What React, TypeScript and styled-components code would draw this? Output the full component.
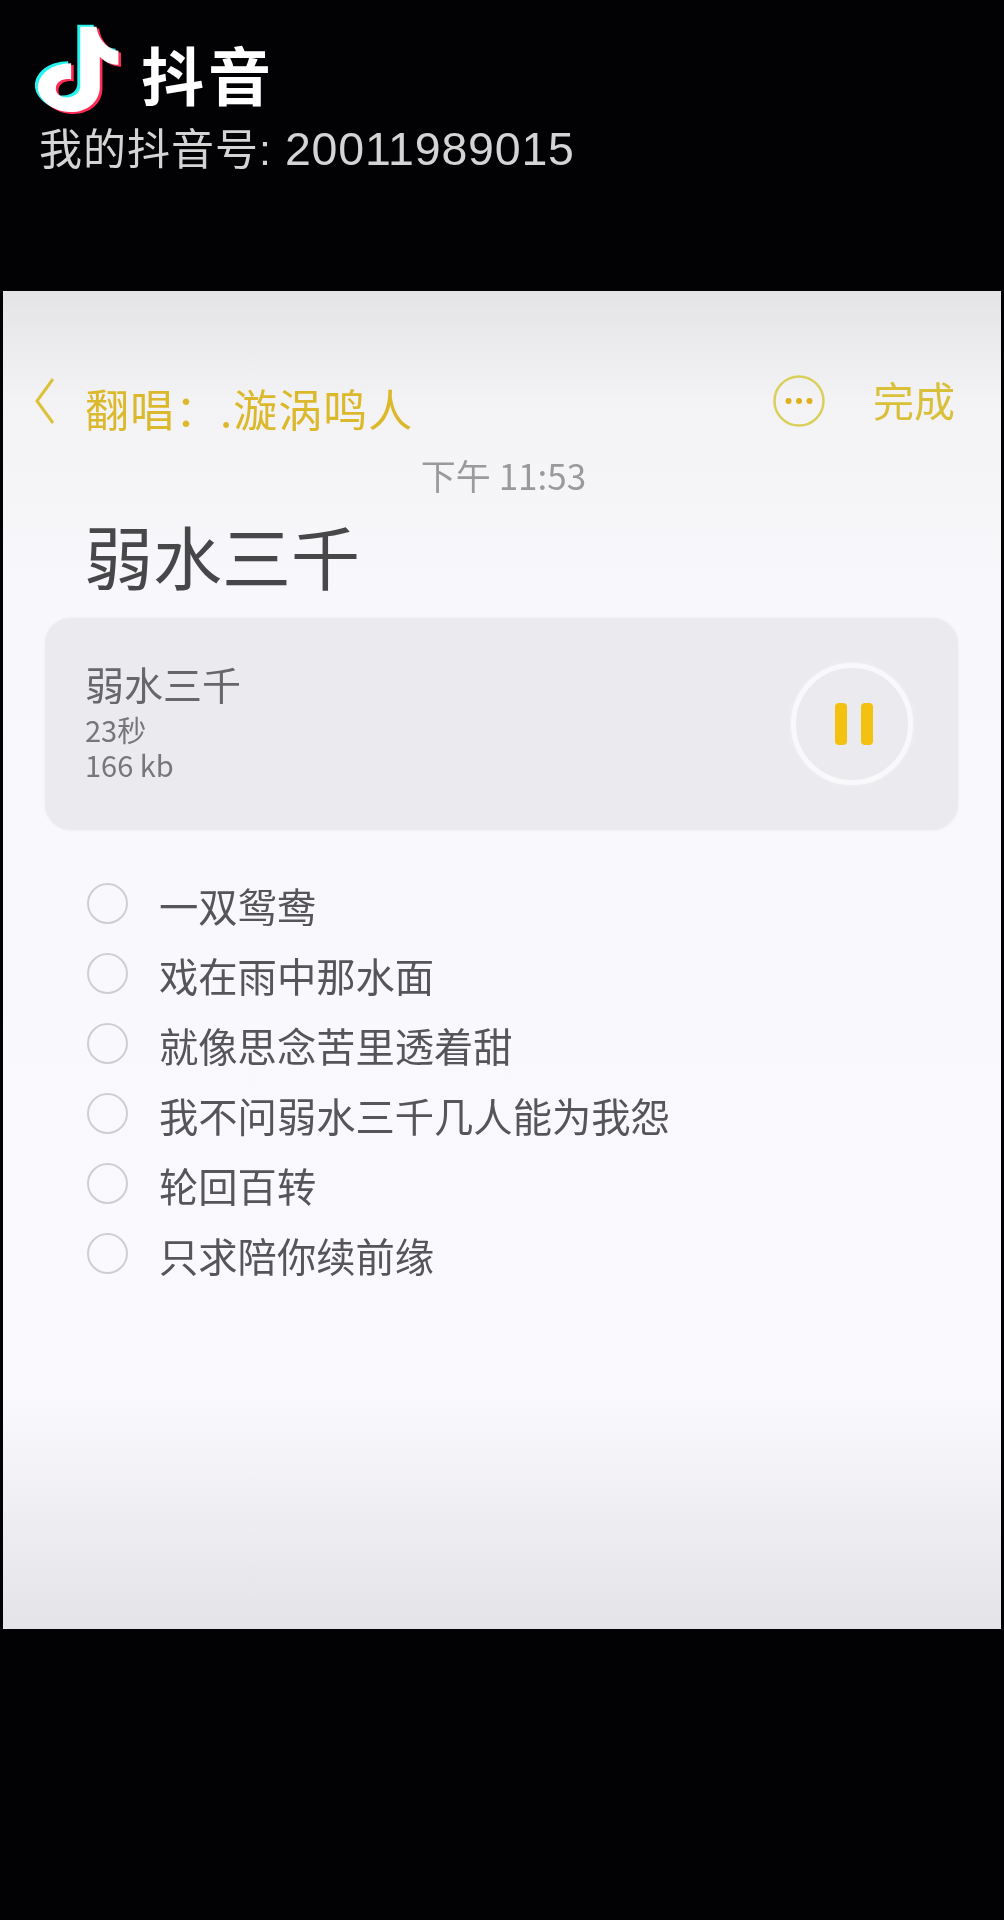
import styled, { createGlobalStyle } from 'styled-components';

const lyrics = [
  '一双鸳鸯',
  '戏在雨中那水面',
  '就像思念苦里透着甜',
  '我不问弱水三千几人能为我怨',
  '轮回百转',
  '只求陪你续前缘',
];

const GlobalStyle = createGlobalStyle`
  html, body {
    margin: 0;
    background: #020204;
  }
  body {
    font-family: "Noto Sans CJK SC", "Liberation Sans", sans-serif;
  }
`;

const Page = styled.div`
  width: 1004px;
  height: 1920px;
  background: #020204;
  overflow: hidden;
`;

const Watermark = styled.header`
  height: 291px;
  box-sizing: border-box;
  padding: 24px 0 0 32px;
  filter: blur(0.6px);
`;

const Brand = styled.div`
  display: flex;
  align-items: flex-start;
  gap: 19px;
  height: 94px;
`;

const BrandName = styled.span`
  margin-top: 13px;
  font-size: 63px;
  line-height: 72px;
  font-weight: 700;
  letter-spacing: 4px;
  color: #fff;
`;

const AccountLine = styled.div`
  margin: 6px 0 0 7px;
  font-family: "Liberation Sans", "Noto Sans CJK SC", sans-serif;
  font-size: 43px;
  line-height: 50px;
  letter-spacing: 1px;
  color: #d4d4d4;
`;

const AccountNumber = styled.span`
  font-size: 46.5px;
  letter-spacing: 0.8px;
`;

const Note = styled.div`
  height: 1338px;
  margin: 0 3px;
  box-sizing: border-box;
  padding-top: 85px;
  background: linear-gradient(
    #e4e4e6 0,
    #f3f3f5 110px,
    #f8f8fc 300px,
    #f9f9fe 1100px,
    #f0f0f4 1210px,
    #e4e3e8 100%
  );
  filter: blur(0.6px);
`;

const TopBar = styled.div`
  display: flex;
  align-items: center;
  height: 50px;
  padding: 0 46px 0 31px;
`;

const Author = styled.span`
  flex: 1;
  margin: 14px 0 0 29px;
  font-size: 44px;
  line-height: 50px;
  letter-spacing: 1px;
  color: #dcb92c;
  white-space: nowrap;
`;

const Done = styled.span`
  margin: -4px 0 0 48px;
  font-size: 41px;
  line-height: 50px;
  color: #d9c038;
`;

const Timestamp = styled.div`
  margin-top: 26px;
  padding-left: 3px;
  text-align: center;
  font-size: 35px;
  line-height: 46px;
  color: #9a9a9c;
`;

const Title = styled.h1`
  margin: 15px 0 0 81px;
  font-size: 69px;
  line-height: 84px;
  font-weight: 400;
  color: #47474a;
`;

const AudioCard = styled.section`
  display: flex;
  align-items: center;
  justify-content: space-between;
  height: 212px;
  margin: 21px 43px 0 42px;
  box-sizing: border-box;
  padding: 0 45px 0 40px;
  border-radius: 26px;
  background: #ebebef;
  box-shadow: 0 0 3px #ebebef;
`;

const AudioText = styled.div`
  margin-top: -6px;
`;

const AudioName = styled.div`
  margin-bottom: 6px;
  font-size: 39px;
  line-height: 46px;
  color: #67676a;
`;

const AudioMeta = styled.div`
  font-size: 29px;
  line-height: 35px;
  color: #77777a;
`;

const PauseButton = styled.div`
  display: flex;
  align-items: center;
  justify-content: center;
  gap: 14px;
  width: 122px;
  height: 122px;
  box-sizing: border-box;
  padding-left: 3px;
  border: 5px solid #f9f9fb;
  border-radius: 50%;
  box-shadow: 0 0 3px #f9f9fb;
`;

const PauseBar = styled.span`
  width: 12px;
  height: 42px;
  border-radius: 4px;
  background: #f3c10f;
`;

const Checklist = styled.ul`
  display: flex;
  flex-direction: column;
  gap: 20px;
  margin: 50px 0 0;
  padding: 0 0 0 84px;
  list-style: none;
`;

const ChecklistRow = styled.li`
  display: flex;
  align-items: flex-start;
  gap: 31px;
  height: 50px;
`;

const Radio = styled.span`
  flex: none;
  width: 41px;
  height: 41px;
  margin-top: 3px;
  box-sizing: border-box;
  border: 2px solid #cfcfd2;
  border-radius: 50%;
`;

const RowText = styled.span`
  font-size: 39.3px;
  line-height: 50px;
  color: #565659;
`;

function DouyinLogo() {
  const shape =
    'M178 48 L228 48 C232 85 262 118 295 122 L295 165 C272 165 252 155 238 140 L238 232 C238 280 195 312 145 310 C90 308 48 270 48 235 C48 195 90 160 150 160 L150 210 C125 205 103 218 103 238 C103 255 118 265 135 265 C160 265 178 250 178 230 Z';
  return (
    <svg width="90" height="92" viewBox="30 40 276 282" aria-hidden="true">
      <path d={shape} fill="#25f4ee" transform="translate(-9 -6)" />
      <path d={shape} fill="#fe2c55" transform="translate(8 6)" />
      <path d={shape} fill="#fff" />
    </svg>
  );
}

function BackIcon() {
  return (
    <svg width="22" height="48" viewBox="0 0 22 48" fill="none" aria-hidden="true">
      <path d="M19 2 L3 24 L19 46" stroke="#dcc23a" strokeWidth="3" />
    </svg>
  );
}

function MoreIcon() {
  return (
    <svg width="52" height="52" viewBox="0 0 52 52" fill="none" aria-hidden="true">
      <circle cx="26" cy="26" r="24.5" stroke="#dbcf5c" strokeWidth="2.5" />
      <circle cx="15.5" cy="26" r="3" fill="#dfb01c" />
      <circle cx="26" cy="26" r="3" fill="#dfb01c" />
      <circle cx="36.5" cy="26" r="3" fill="#dfb01c" />
    </svg>
  );
}

export default function App() {
  return (
    <Page>
      <GlobalStyle />
      <Watermark>
        <Brand>
          <DouyinLogo />
          <BrandName>抖音</BrandName>
        </Brand>
        <AccountLine>
          我的抖音号: <AccountNumber>20011989015</AccountNumber>
        </AccountLine>
      </Watermark>

      <Note>
        <TopBar>
          <BackIcon />
          <Author>翻唱：.漩涡鸣人</Author>
          <MoreIcon />
          <Done>完成</Done>
        </TopBar>
        <Timestamp>下午 11:53</Timestamp>
        <Title>弱水三千</Title>

        <AudioCard>
          <AudioText>
            <AudioName>弱水三千</AudioName>
            <AudioMeta>23秒</AudioMeta>
            <AudioMeta>166 kb</AudioMeta>
          </AudioText>
          <PauseButton>
            <PauseBar />
            <PauseBar />
          </PauseButton>
        </AudioCard>

        <Checklist>
          {lyrics.map(line => (
            <ChecklistRow key={line}>
              <Radio />
              <RowText>{line}</RowText>
            </ChecklistRow>
          ))}
        </Checklist>
      </Note>
    </Page>
  );
}
